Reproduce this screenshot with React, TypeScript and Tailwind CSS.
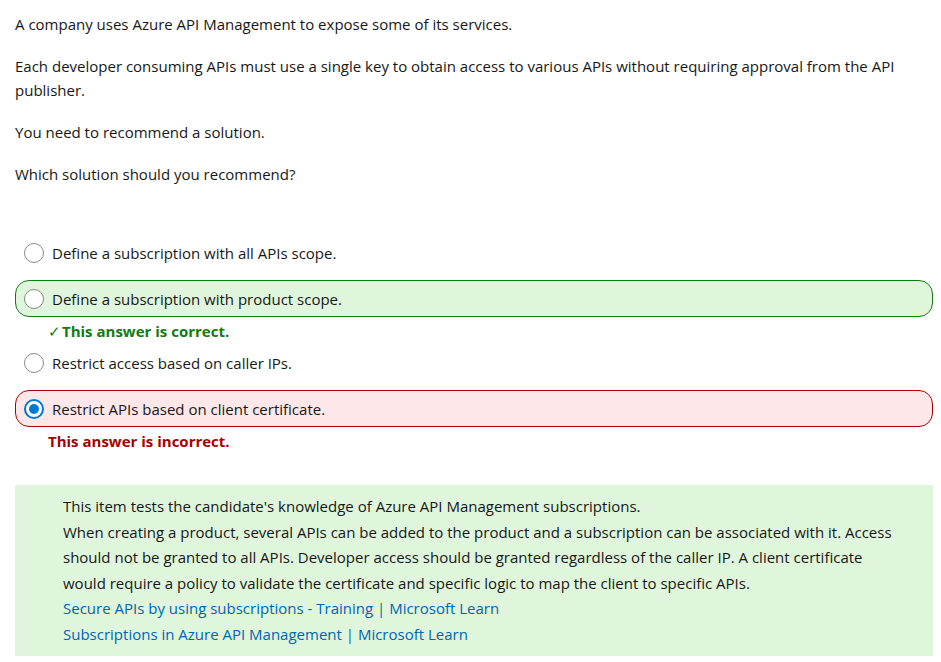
import React from "react";

function Radio({ checked }: { checked?: boolean }) {
  return checked ? (
    <span className="flex h-[20px] w-[20px] shrink-0 items-center justify-center rounded-full border-2 border-[#0078d4] bg-white">
      <span className="h-[10px] w-[10px] rounded-full bg-[#0078d4]" />
    </span>
  ) : (
    <span className="h-[20px] w-[20px] shrink-0 rounded-full border border-[#8a8886] bg-white" />
  );
}

function Option({
  text,
  checked,
  variant,
}: {
  text: string;
  checked?: boolean;
  variant?: "correct" | "incorrect";
}) {
  const box =
    variant === "correct"
      ? "border border-[#107c10] bg-[#dff6dd]"
      : variant === "incorrect"
      ? "border border-[#a80000] bg-[#fde7e9]"
      : "border border-transparent";
  return (
    <div className={`flex h-[37px] items-center gap-[8px] rounded-[14px] pl-[8px] ${box}`}>
      <Radio checked={checked} />
      <span>{text}</span>
    </div>
  );
}

export default function App() {
  return (
    <div
      className="min-h-[662px] bg-white px-[15px] pt-[12px] text-[15px] leading-[24px] text-[#171717]"
      style={{ fontFamily: '"Open Sans", "Noto Sans", sans-serif' }}
    >
      <p>A company uses Azure API Management to expose some of its services.</p>
      <p className="mt-[18px]">
        Each developer consuming APIs must use a single key to obtain access to various APIs without requiring approval from the API publisher.
      </p>
      <p className="mt-[18px]">You need to recommend a solution.</p>
      <p className="mt-[18px]">Which solution should you recommend?</p>

      <div className="mt-[48px] flex w-[918px] flex-col">
        <Option text="Define a subscription with all APIs scope." />
        <div className="mt-[9px]">
          <Option text="Define a subscription with product scope." variant="correct" />
        </div>
        <div className="flex h-[28px] items-center pl-[33px] font-bold text-[#107c10]">
          <span className="mr-[1px] font-normal">✓</span>This answer is correct.
        </div>
        <div className="mt-[-1px]">
          <Option text="Restrict access based on caller IPs." />
        </div>
        <div className="mt-[9px]">
          <Option text="Restrict APIs based on client certificate." checked variant="incorrect" />
        </div>
        <div className="flex h-[28px] items-center pl-[33px] font-bold text-[#a80000]">
          This answer is incorrect.
        </div>
      </div>

      <div className="mt-[30px] w-[918px] bg-[#dff6dd] pb-[8px] pl-[48px] pr-[34px] pt-[9px] leading-[25.6px]">
        <p>This item tests the candidate's knowledge of Azure API Management subscriptions.</p>
        <p>
          When creating a product, several APIs can be added to the product and a subscription can be associated with it. Access should not be granted to all APIs. Developer access should be granted regardless of the caller IP. A client certificate would require a policy to validate the certificate and specific logic to map the client to specific APIs.
        </p>
        <p>
          <a className="text-[#0065b3]">Secure APIs by using subscriptions - Training | Microsoft Learn</a>
        </p>
        <p>
          <a className="text-[#0065b3]">Subscriptions in Azure API Management | Microsoft Learn</a>
        </p>
      </div>
    </div>
  );
}
